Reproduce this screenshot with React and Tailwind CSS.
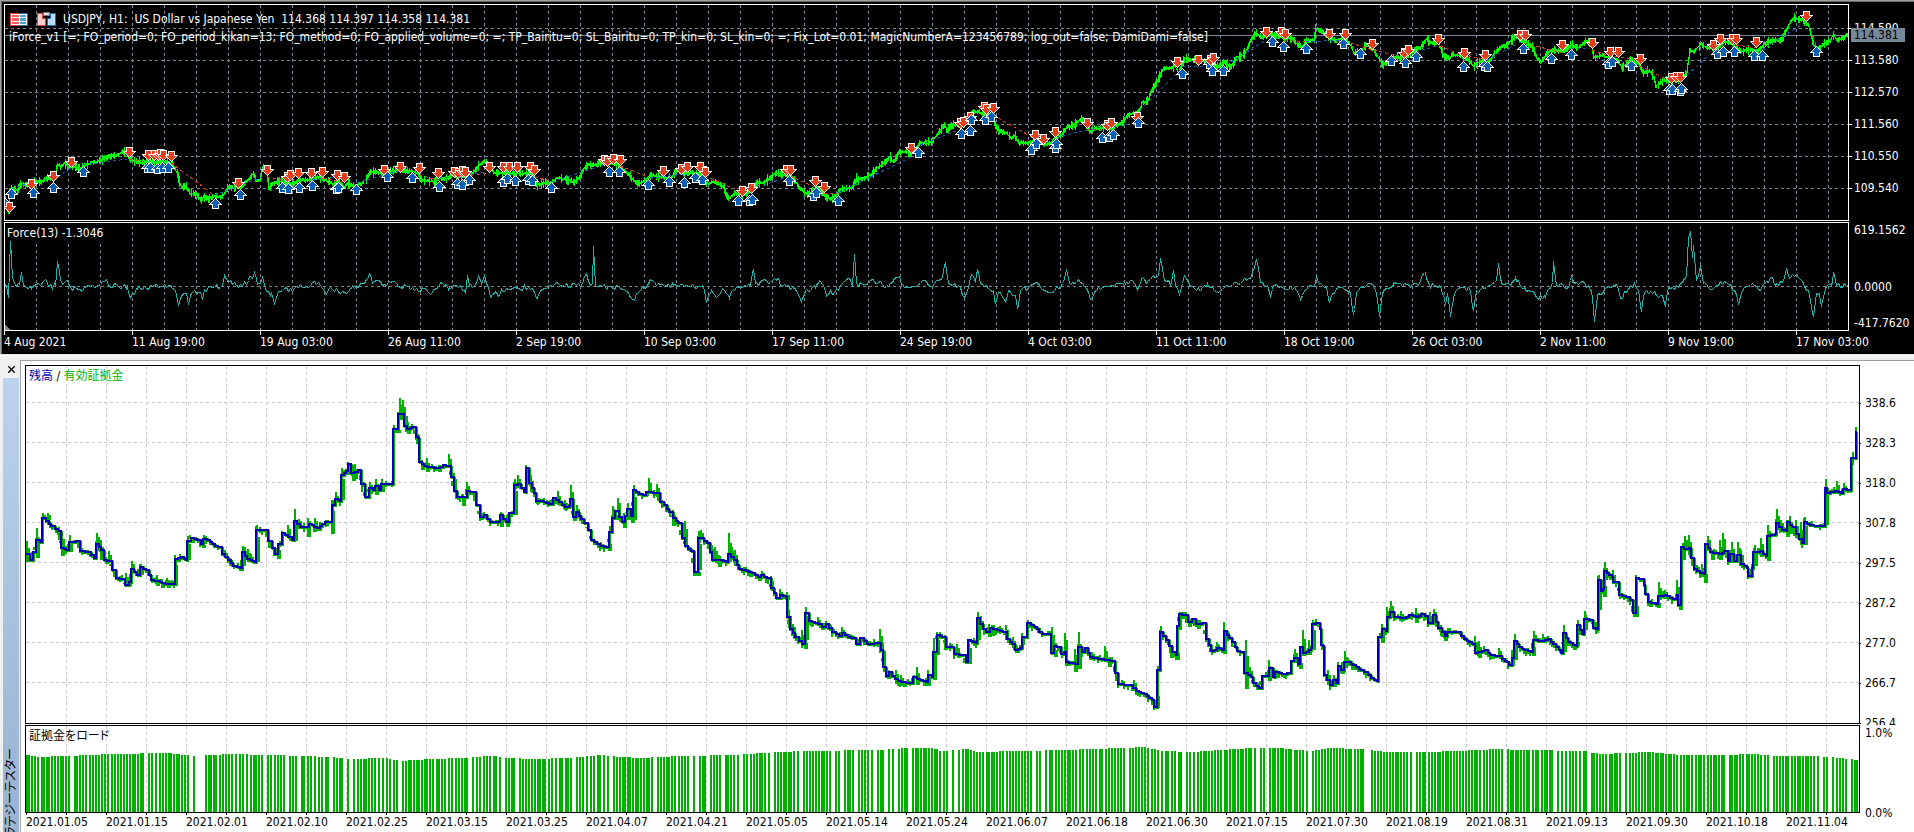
import React from 'react';
import { X } from 'lucide-react';

// x,y vertices of the hourly price line
const PRICE = `5,199 7,208 9,213 10,190 12,188 18,191 20,184 25,184 31,185 36,181 41,182 47,178 51,179 55,177 58,164 61,167 65,163 68,167 71,166 80,169 86,164 96,162 101,161 104,158 112,156 118,155 122,152 127,151 129,158 133,160 141,163 145,162 155,162 167,162 173,165 177,172 180,183 182,187 186,186 190,193 196,194 201,200 204,197 209,199 214,196 220,197 224,195 228,187 235,188 243,186 247,181 254,173 256,181 260,180 263,167 267,172 269,188 273,183 280,181 286,183 294,184 300,180 308,180 312,178 320,177 327,181 333,184 339,182 345,188 347,184 355,186 363,183 367,178 371,171 380,173 388,173 394,171 398,168 404,171 412,171 418,173 420,179 427,181 435,182 439,178 447,178 455,175 465,177 473,173 478,167 484,161 489,165 494,173 506,173 516,174 527,173 533,175 537,185 545,183 551,183 557,178 565,179 575,182 580,177 584,169 588,165 598,164 604,163 612,163 620,165 624,170 631,177 637,183 642,183 648,178 652,175 660,177 671,178 677,170 683,173 693,173 701,175 707,184 711,183 715,182 724,187 727,197 730,198 735,193 742,195 750,192 756,184 764,182 771,177 777,173 785,175 793,177 799,187 805,193 809,194 817,187 826,197 832,199 838,193 842,189 852,188 856,180 862,179 871,175 877,168 887,161 890,157 894,162 899,152 907,152 911,155 920,143 932,142 938,134 941,130 945,124 947,131 952,125 960,126 966,123 973,112 979,112 985,115 993,115 995,125 999,131 1007,133 1011,138 1015,136 1019,143 1028,143 1036,140 1044,145 1052,142 1056,136 1062,135 1067,127 1075,125 1081,119 1085,122 1090,132 1095,128 1103,128 1113,127 1122,123 1128,115 1136,113 1140,110 1142,103 1148,101 1152,90 1158,80 1164,68 1171,68 1175,66 1179,72 1185,58 1189,60 1199,60 1207,62 1218,67 1224,62 1231,68 1236,58 1240,57 1246,52 1252,38 1256,33 1262,38 1269,35 1278,35 1286,38 1292,38 1296,43 1303,48 1305,42 1314,40 1316,28 1323,32 1329,37 1335,41 1343,38 1350,43 1354,53 1360,52 1366,45 1374,50 1380,60 1383,65 1390,61 1398,57 1405,58 1413,52 1421,47 1427,39 1431,43 1439,42 1443,55 1450,59 1452,54 1460,56 1468,59 1474,66 1480,62 1490,62 1494,54 1501,47 1507,45 1515,37 1521,40 1527,43 1533,48 1537,58 1541,63 1547,53 1554,50 1562,51 1572,45 1578,48 1586,41 1592,44 1594,58 1603,55 1609,58 1619,61 1622,68 1631,60 1639,63 1643,73 1650,70 1654,78 1656,86 1664,80 1672,82 1682,78 1687,72 1690,50 1694,52 1701,44 1707,48 1717,48 1725,42 1731,43 1741,52 1749,49 1758,51 1764,45 1770,41 1782,40 1786,30 1791,22 1794,18 1803,20 1809,25 1813,43 1817,49 1823,45 1831,40 1834,34 1837,40 1843,38 1847,35`;

const FORCE = `5,284 8,297 10,240 12,277 15,284 19,284 21,272 23,285 31,288 41,284 45,279 48,286 55,285 57,261 60,279 63,283 67,280 70,287 81,291 84,287 100,284 106,279 109,285 127,286 129,295 133,293 137,289 154,285 171,287 175,290 178,305 182,294 186,293 188,304 191,293 200,292 202,299 204,289 212,287 222,285 224,275 229,281 237,285 247,283 249,276 252,278 254,272 257,284 260,283 262,277 266,291 271,293 274,303 278,291 284,288 292,291 296,286 310,285 318,282 322,288 325,293 331,288 337,289 340,293 346,293 351,288 357,287 364,283 369,273 372,283 378,280 382,285 389,281 392,281 398,286 416,288 420,291 423,288 429,293 433,289 442,283 449,287 461,287 465,293 467,275 469,285 475,284 478,276 481,283 484,275 488,287 490,297 495,291 498,296 501,289 514,287 531,288 537,298 541,289 549,286 555,283 569,286 582,283 586,273 590,285 592,283 593,246 595,285 612,287 622,289 629,295 633,299 637,293 640,290 644,288 651,280 656,285 673,285 701,286 704,290 706,302 711,290 716,297 722,288 729,298 733,289 738,287 750,285 753,269 755,283 758,285 762,280 768,283 777,278 781,285 793,288 801,301 805,290 815,287 819,280 824,287 826,296 830,290 834,293 840,285 849,278 852,286 854,254 856,283 866,284 873,279 877,283 887,285 899,276 901,285 911,287 922,280 928,285 934,283 941,279 945,262 948,283 958,285 964,297 968,287 971,274 975,282 977,270 980,283 987,287 993,290 995,303 999,292 1005,301 1009,290 1015,295 1017,308 1020,290 1028,287 1038,283 1044,290 1052,292 1062,283 1066,269 1069,283 1079,281 1086,288 1090,299 1095,290 1109,286 1124,285 1132,280 1137,290 1141,278 1146,283 1153,275 1158,275 1160,258 1164,280 1171,282 1173,270 1175,285 1179,295 1184,275 1189,284 1199,290 1207,283 1217,291 1228,286 1240,283 1245,278 1250,278 1256,259 1260,282 1267,285 1270,296 1273,285 1276,284 1282,287 1294,287 1300,299 1305,289 1314,286 1316,276 1319,283 1326,287 1329,302 1332,293 1337,288 1349,290 1353,314 1356,292 1362,287 1372,284 1376,293 1379,316 1382,293 1388,288 1396,283 1409,286 1419,282 1421,277 1425,272 1429,285 1439,285 1442,293 1445,304 1447,293 1450,316 1454,293 1460,287 1470,290 1473,310 1476,290 1484,288 1492,283 1496,280 1498,263 1501,282 1511,283 1515,277 1523,288 1533,291 1537,298 1545,297 1549,288 1552,282 1553,261 1556,285 1568,287 1571,276 1574,283 1584,282 1591,290 1594,321 1597,295 1605,288 1616,284 1620,298 1627,290 1634,283 1638,290 1641,311 1644,292 1652,293 1662,295 1665,305 1668,287 1678,287 1683,280 1686,277 1688,237 1690,231 1692,257 1693,245 1696,280 1700,265 1703,283 1713,288 1724,281 1731,286 1735,292 1738,304 1742,290 1754,285 1760,290 1764,283 1772,277 1775,285 1782,282 1786,268 1789,278 1795,275 1803,283 1808,290 1813,316 1816,293 1819,293 1821,306 1825,288 1831,285 1833,273 1836,285 1847,285`;

const BALANCE = `26,554 30,560 33,552 36,540 40,542 42,518 46,521 51,526 58,531 61,548 66,550 69,542 76,541 80,551 88,552 94,558 96,544 101,550 104,560 109,561 112,570 116,578 122,579 125,585 129,582 131,569 137,575 140,567 146,570 151,580 157,581 165,584 174,584 175,559 181,557 186,560 187,541 191,538 197,540 201,544 203,539 207,540 212,544 218,547 222,554 228,560 233,566 240,568 242,552 247,559 255,562 256,530 265,530 268,541 275,554 278,544 281,544 282,533 288,537 292,540 294,521 300,527 306,527 309,524 317,528 325,522 331,522 332,505 335,499 340,501 341,475 346,471 348,464 351,473 358,470 361,484 365,497 369,488 373,490 375,486 379,490 381,484 392,484 393,429 397,429 398,414 403,414 404,426 407,429 412,427 416,437 418,438 419,462 424,466 437,468 443,465 449,466 451,477 454,491 457,497 464,497 467,491 473,492 476,505 480,517 484,515 490,522 498,522 500,515 506,522 509,513 513,513 514,485 518,484 524,492 526,468 529,483 534,493 536,501 541,501 549,504 553,498 559,502 565,507 569,506 570,499 573,517 576,512 584,523 588,530 591,540 600,546 607,547 609,532 612,518 615,511 622,522 627,509 631,516 633,490 639,494 643,495 646,492 656,493 660,502 664,505 669,512 673,518 678,523 682,538 685,546 691,551 694,572 696,572 698,538 701,538 707,543 712,560 720,560 726,562 728,554 734,560 739,569 752,573 758,577 761,575 767,578 771,588 776,598 780,595 786,597 787,617 790,629 795,637 802,644 804,644 805,613 809,621 818,624 822,627 826,624 832,632 839,636 842,633 848,637 854,638 856,644 860,638 867,644 878,643 881,650 883,667 886,676 889,672 895,679 901,682 909,683 913,677 920,680 926,682 928,675 932,677 933,652 937,635 942,637 946,647 952,647 954,654 962,655 966,662 968,640 976,643 977,618 983,629 986,632 990,628 1003,632 1007,639 1012,644 1015,650 1020,648 1022,637 1026,637 1027,623 1034,627 1042,634 1050,634 1051,653 1054,646 1059,647 1061,654 1064,652 1066,662 1075,664 1078,647 1082,652 1085,648 1090,657 1101,659 1113,661 1115,673 1118,684 1130,685 1136,691 1144,694 1152,700 1154,707 1156,707 1157,670 1159,670 1160,632 1166,640 1172,652 1176,655 1177,626 1179,614 1184,615 1188,622 1192,619 1196,624 1202,623 1206,639 1211,651 1217,648 1222,650 1224,631 1232,642 1237,651 1243,652 1244,673 1251,677 1253,683 1259,688 1262,676 1266,676 1269,668 1273,677 1275,672 1282,674 1290,673 1291,661 1294,658 1298,664 1300,647 1303,653 1309,650 1311,648 1312,624 1316,623 1320,629 1321,645 1323,646 1324,675 1330,685 1333,680 1336,683 1338,666 1341,670 1344,662 1348,662 1356,667 1364,672 1371,678 1377,681 1378,637 1382,629 1386,631 1387,617 1390,612 1394,617 1403,618 1409,615 1416,617 1421,614 1425,616 1428,623 1432,623 1433,615 1438,628 1445,636 1447,632 1458,632 1464,639 1472,644 1475,653 1485,650 1490,655 1498,656 1502,659 1507,662 1509,665 1512,658 1514,641 1519,647 1524,650 1531,652 1533,640 1541,641 1548,639 1556,647 1561,653 1563,633 1568,642 1576,646 1577,625 1582,634 1584,619 1592,620 1593,628 1596,629 1598,580 1601,591 1603,589 1604,571 1612,577 1613,582 1617,582 1619,595 1626,597 1630,600 1633,613 1635,613 1636,578 1641,579 1644,585 1645,594 1648,602 1656,604 1658,596 1664,595 1673,599 1677,595 1678,605 1680,605 1681,547 1684,549 1689,548 1691,558 1694,569 1700,573 1704,574 1705,544 1710,552 1719,554 1724,551 1728,561 1730,554 1734,561 1737,555 1741,564 1747,568 1748,576 1752,568 1753,552 1760,551 1766,556 1767,536 1775,534 1776,523 1782,530 1786,531 1787,522 1792,527 1796,534 1802,543 1804,522 1810,525 1817,526 1824,526 1825,488 1827,493 1835,491 1841,493 1843,489 1850,490 1851,458 1855,458 1856,431`;

// x,top,bottom of each equity swing around the balance
const EQUITY = `26,541,562 36,528,558 42,513,520 47,513,520 58,527,540 61,531,556 69,535,552 96,533,545 100,540,560 108,551,562 125,573,586 131,561,570 128,578,586 140,564,575 156,575,586 166,578,585 174,555,586 187,536,560 202,544,548 203,535,544 224,550,558 240,560,571 242,546,566 244,547,558 247,549,560 250,554,562 256,525,562 268,536,548 277,545,559 287,525,537 294,509,541 298,519,526 307,518,537 314,518,526 318,526,531 331,500,534 335,492,503 341,468,500 347,462,475 352,465,481 354,464,479 361,480,487 369,482,492 375,479,495 381,479,492 393,425,433 397,428,433 399,398,420 402,400,420 404,410,428 407,422,434 416,430,444 421,460,470 426,458,472 438,465,472 448,454,468 453,473,491 462,494,506 466,482,495 480,514,520 500,512,527 506,515,527 514,479,515 517,475,487 526,467,485 530,475,492 536,495,504 546,500,504 557,491,505 564,500,510 570,485,507 573,510,521 576,505,518 600,542,549 608,540,551 612,506,520 617,498,513 623,513,528 627,503,520 631,510,523 633,485,520 648,478,493 656,484,497 672,510,526 684,521,546 697,570,576 698,531,570 700,530,540 711,545,558 714,547,560 718,555,567 728,533,562 731,547,560 734,550,566 749,570,577 758,575,581 761,571,578 770,576,590 779,589,598 786,592,600 788,610,628 792,624,634 801,630,645 804,640,649 805,607,640 810,620,626 817,617,626 828,623,630 841,627,637 856,640,646 879,629,650 882,643,666 887,670,679 895,670,682 900,675,684 916,667,685 927,670,686 933,638,680 936,632,655 944,635,650 956,644,656 968,640,664 977,612,640 980,616,630 988,624,637 991,626,636 999,626,633 1005,625,640 1012,637,648 1016,646,653 1021,633,645 1027,620,628 1051,627,652 1054,646,657 1064,633,655 1067,660,666 1074,649,672 1078,632,669 1081,647,653 1091,652,657 1104,646,661 1108,658,667 1121,680,686 1133,680,690 1156,690,708 1160,626,640 1170,645,658 1176,650,660 1178,614,630 1185,612,618 1188,618,627 1197,620,629 1216,642,652 1223,622,654 1226,630,640 1245,640,689 1249,667,678 1256,682,690 1268,660,681 1276,670,678 1294,649,662 1299,660,669 1302,630,656 1308,640,655 1312,620,650 1327,670,684 1333,675,684 1341,662,674 1344,651,668 1347,658,666 1381,624,643 1386,607,620 1390,601,616 1400,611,620 1415,608,623 1429,612,625 1433,609,618 1440,625,636 1444,630,641 1474,636,654 1478,641,658 1498,648,656 1511,650,666 1514,634,660 1532,642,656 1533,631,642 1542,634,642 1561,650,655 1563,625,652 1576,640,646 1577,620,635 1584,611,630 1595,622,633 1598,575,610 1603,580,597 1604,562,580 1612,570,584 1635,600,617 1657,600,608 1658,582,600 1660,588,598 1664,590,597 1676,580,600 1679,595,610 1682,543,560 1684,536,548 1688,535,555 1696,565,572 1701,564,577 1704,570,583 1707,536,548 1711,550,560 1719,540,560 1722,533,550 1731,542,563 1737,542,560 1740,550,566 1749,570,578 1754,545,566 1760,538,557 1767,525,561 1776,509,530 1780,520,530 1786,520,537 1789,516,534 1795,520,538 1800,522,545 1804,517,545 1825,479,525 1836,481,492 1843,483,492 1850,484,493 1852,452,465 1855,427,458`;

const LOAD = `26,755 40,757 60,756 90,755 110,754 165,753 180,755 195,756 230,754 270,755 330,757 345,759 385,758 400,761 430,759 460,758 490,756 510,758 530,759 570,758 600,755 620,757 640,758 680,756 730,755 780,752 800,751 880,750 905,748 930,748 940,751 965,749 977,752 1060,750 1120,748 1145,747 1160,751 1190,752 1250,748 1275,748 1310,751 1330,748 1360,749 1385,752 1430,752 1500,749 1520,750 1580,751 1600,754 1650,752 1680,755 1720,755 1750,754 1780,756 1810,756 1840,758 1858,760`;

const SELLS = `9,207 31,184 53,176 71,162 129,152 148,155 154,155 158,155 160,154 163,155 171,156 238,183 267,170 287,177 290,175 298,173 311,173 322,172 337,175 344,177 384,170 400,167 419,168 438,173 454,172 458,173 462,171 465,172 489,167 503,167 509,167 517,167 530,167 534,170 604,160 607,161 613,159 620,160 663,171 681,169 687,167 700,167 705,172 742,191 751,188 786,170 790,170 815,181 824,187 911,148 960,123 963,122 970,117 984,107 986,109 993,108 1035,135 1043,139 1055,132 1087,123 1107,125 1111,123 1137,117 1177,62 1198,60 1210,60 1213,58 1266,32 1281,32 1285,34 1329,34 1345,34 1372,44 1404,53 1408,50 1438,39 1464,53 1485,55 1520,35 1525,35 1562,45 1592,43 1610,52 1618,52 1640,59 1671,78 1676,77 1680,77 1713,45 1720,39 1732,39 1736,39 1756,42 1806,16`;

const BUYS = `4,202 11,193 33,192 53,187 83,171 147,167 150,167 157,168 162,167 168,167 215,203 240,194 282,187 288,188 299,187 312,185 336,188 338,187 356,189 387,176 412,177 439,186 457,183 462,184 469,179 503,181 507,178 515,180 528,179 532,180 551,187 609,171 619,171 648,184 669,181 684,182 695,177 702,179 738,200 749,200 752,199 789,180 813,195 816,192 838,200 918,152 961,133 970,130 971,119 985,119 991,116 1031,149 1036,143 1055,147 1056,143 1102,137 1109,136 1113,134 1138,122 1182,73 1209,63 1212,70 1223,70 1272,41 1283,46 1306,48 1343,43 1360,53 1391,60 1405,62 1416,56 1463,66 1484,65 1487,66 1523,48 1551,58 1571,54 1608,63 1612,61 1631,65 1669,89 1672,89 1680,90 1681,88 1717,53 1723,51 1734,51 1754,55 1762,55 1816,51`;

const LONG_TRADES = 'M11 189L31 182M53 180L71 168M83 165L127 159M215 195L262 177M312 180L337 177M356 183L398 171M439 178L486 172M551 182L604 165M650 178L687 174M752 190L786 177M838 193L911 157M920 145L961 129M1056 137L1102 127M1113 127L1138 122M1140 110L1182 68M1182 66L1209 66M1231 62L1266 40M1306 42L1340 40M1416 52L1440 45M1487 60L1521 42M1571 49L1590 48M1687 75L1708 56M1762 50L1801 25';
const SHORT_TRADES = 'M9 203L12 189M129 159L145 162M171 163L214 195M267 177L287 181M322 178L345 182M419 175L438 180M465 176L489 173M534 177L551 181M620 166L648 177M705 176L742 192M790 176L815 187M824 193L838 193M993 115L1035 139M1087 129L1107 130M1285 40L1305 42M1345 41L1372 50L1404 57M1440 46L1464 56L1485 59M1525 43L1562 53M1592 50L1610 56L1640 60M1640 66L1672 82M1736 45L1756 48M1809 25L1816 45';

const SETTINGS =
  'iForce_v1 [=; FO_period=0; FO_period_kikan=13; FO_method=0; FO_applied_volume=0; =; TP_Bairitu=0; SL_Bairitu=0; TP_kin=0; SL_kin=0; =; Fix_Lot=0.01; MagicNumberA=123456789; log_out=false; DamiDami=false]';

const PRICE_LEVELS = ['114.590', '113.580', '112.570', '111.560', '110.550', '109.540'];
const HOURS = [
  '4 Aug 2021', '11 Aug 19:00', '19 Aug 03:00', '26 Aug 11:00', '2 Sep 19:00',
  '10 Sep 03:00', '17 Sep 11:00', '24 Sep 19:00', '4 Oct 03:00', '11 Oct 11:00',
  '18 Oct 19:00', '26 Oct 03:00', '2 Nov 11:00', '9 Nov 19:00', '17 Nov 03:00',
];
const BALANCE_LEVELS = ['338.6', '328.3', '318.0', '307.8', '297.5', '287.2', '277.0', '266.7', '256.4'];
const DAYS = [
  '2021.01.05', '2021.01.15', '2021.02.01', '2021.02.10', '2021.02.25', '2021.03.15',
  '2021.03.25', '2021.04.07', '2021.04.21', '2021.05.05', '2021.05.14', '2021.05.24',
  '2021.06.07', '2021.06.18', '2021.06.30', '2021.07.15', '2021.07.30', '2021.08.19',
  '2021.08.31', '2021.09.13', '2021.09.30', '2021.10.18', '2021.11.04',
];

const parse = (text) => text.split(' ').map((item) => item.split(',').map(Number));

// small seeded generator, so that every render draws the same ticks
const makeRandom = (seed) => {
  let state = seed;
  return () => {
    state = (state * 16807) % 2147483647;
    return state / 2147483647;
  };
};

const sample = (points, x) => {
  let i = 1;
  while (i < points.length - 1 && points[i][0] < x) i += 1;
  const [x0, y0] = points[i - 1];
  const [x1, y1] = points[i];
  const t = Math.min(1, Math.max(0, (x - x0) / (x1 - x0)));
  return y0 + (y1 - y0) * t;
};

const pricePath = () => {
  const points = parse(PRICE);
  const random = makeRandom(11);
  let d = '';
  for (let x = 5; x < 1848; x += 1) {
    const y = sample(points, x) + (random() - 0.5) * 3;
    const next = sample(points, x + 1);
    const spread = 0.5 + random() * random() * 5;
    const top = Math.round(Math.min(y, next) - spread);
    const bottom = Math.round(Math.max(y, next) + spread);
    d += `M${x + 0.5} ${top}V${bottom}`;
  }
  return d;
};

const forcePath = () => {
  const points = parse(FORCE);
  const keys = new Map(points);
  const random = makeRandom(29);
  let d = '';
  for (let x = 5; x < 1848; x += 1) {
    if (!keys.has(x) && x % 2) continue;
    const y = keys.has(x) ? keys.get(x) : sample(points, x) + (random() - 0.5) * 5;
    d += `${d ? 'L' : 'M'}${x + 0.5} ${Math.round(y) + 0.5}`;
  }
  return d;
};

const balancePath = (shift = 0) => {
  const points = parse(BALANCE).map(([x, y]) => [x + shift, y + shift]);
  let d = `M${points[0][0]} ${points[0][1]}`;
  points.slice(1).forEach(([x, y], i) => {
    const [px, py] = points[i];
    const steps = Math.max(1, Math.round((x - px) / 3));
    for (let s = 1; s <= steps; s += 1) {
      d += `H${Math.round(px + ((x - px) * s) / steps)}V${Math.round(py + ((y - py) * s) / steps)}`;
    }
  });
  return d;
};

const equityPath = () => {
  const swings = parse(EQUITY).map(([x, top, bottom]) => {
    const inset = Math.round((bottom - top) / 3);
    return `M${x + 1} ${top}V${bottom}${x < 1850 ? `M${x + 3} ${top + inset}V${bottom}` : ''}`;
  });
  const points = parse(BALANCE);
  const random = makeRandom(5);
  for (let x = 28; x < 1850; x += 2) {
    const y = Math.round(sample(points, x));
    swings.push(`M${x} ${y - Math.round(random() * 4)}V${y + Math.round(random() * 5)}`);
  }
  return swings.join('');
};

const loadPath = () => {
  const points = parse(LOAD);
  const random = makeRandom(71);
  let d = '';
  let x = 26;
  while (x < 1856) {
    const r = random();
    const width = r < 0.25 ? 4 : 2;
    const gap = random();
    const idle = (x > 194 && x < 201) || (x > 1361 && x < 1370);
    if (!idle) d += `M${x} ${Math.round(sample(points, x))}h${width}V812h-${width}z`;
    x += width + 1;
    if (gap < 0.3) x += 1;
    if (gap < 0.1) x += 2;
  }
  return d;
};

const PRICE_PATH = pricePath();
const FORCE_PATH = forcePath();
const BALANCE_PATH = balancePath();
const EQUITY_PATH = equityPath() + balancePath(1);
const LOAD_PATH = loadPath();
const MARKERS = [
  ...parse(BUYS).map(([x, y]) => ({ x, y, buy: true })),
  ...parse(SELLS).map(([x, y]) => ({ x, y, buy: false })),
].sort((a, b) => a.x - b.x);

const Grid = ({ xs, ys, top, bottom, left, right, color }) => (
  <g stroke={color} strokeDasharray="3 3">
    {xs.map((x) => (
      <line key={x} x1={x + 0.5} x2={x + 0.5} y1={top} y2={bottom} />
    ))}
    {ys.map((y) => (
      <line key={y} x1={left} x2={right} y1={y + 0.5} y2={y + 0.5} />
    ))}
  </g>
);

const range = (start, step, count) => Array.from({ length: count }, (_, i) => start + i * step);

const Marker = ({ x, y, buy }) => (
  <path
    d={buy ? 'M0 -5L6 1H3V5H-3V1H-6Z' : 'M0 5L6 -1H3V-5H-3V-1H-6Z'}
    transform={`translate(${x + 0.5} ${y + 0.5})`}
    fill={buy ? '#0a5fb4' : '#e2401c'}
    stroke="#fff"
  />
);

const DepthIcon = () => (
  <svg width="18" height="13" viewBox="0 0 18 13" shapeRendering="crispEdges" aria-hidden="true">
    <rect width="9" height="13" fill="#d8453c" />
    <rect x="9" width="9" height="13" fill="#1b6db4" />
    <path d="M1 1h16v11H1z" fill="#fff" />
    <path d="M2 2h7v2H2zM2 5h7v3H2zM2 9h7v2H2z" fill="#e0655c" />
    <path d="M10 2h6v2h-6zM10 5h6v3h-6zM10 9h6v2h-6z" fill="#4f9fdc" />
  </svg>
);

const TradeIcon = () => (
  <svg width="19" height="14" viewBox="0 0 19 14" shapeRendering="crispEdges" aria-hidden="true">
    <path d="M0 1h6v5h3v8H0z" fill="#d8453c" />
    <path d="M1 2h4v5h3v6H1z" fill="#fbd0cb" />
    <path d="M13 1h6v13h-9V6h3z" fill="#1b6db4" />
    <path d="M14 2h4v11h-7V7h3z" fill="#b9dff8" />
    <rect x="6" y="0" width="7" height="4" fill="#777" />
    <rect x="7" y="1" width="5" height="2" fill="#e6e6e6" />
  </svg>
);

const PriceChart = () => (
  <section className="border-t border-l border-[#a0a0a0]">
    <div className="grid grid-cols-[minmax(0,1fr)_65px] gap-y-px border-t border-l border-[#696969] bg-black pt-0.5 pl-0.5 text-white">
      <div className="relative h-[217px] border border-white">
        <svg
          className="block h-full w-full"
          viewBox="5 5 1843 215"
          preserveAspectRatio="none"
          shapeRendering="crispEdges"
          fill="none"
        >
          <Grid xs={range(36, 32, 57)} ys={range(28, 32, 6)} top={5} bottom={218} left={5} right={1848} color="#778899" />
          <line x1="5" x2="1848" y1="35.5" y2="35.5" stroke="#778899" />
          <path d={PRICE_PATH} stroke="#00ff00" />
          <g strokeDasharray="3 3">
            <path d={LONG_TRADES} stroke="#0a5fb4" />
            <path d={SHORT_TRADES} stroke="#e2401c" />
          </g>
          {MARKERS.map((marker, i) => (
            <Marker key={i} {...marker} />
          ))}
        </svg>
        <div className="absolute top-1.5 left-[5px] flex items-center whitespace-pre">
          <DepthIcon />
          <span className="ml-[9px]">
            <TradeIcon />
          </span>
          <h1 className="ml-[7px]">USDJPY, H1:  US Dollar vs Japanese Yen  114.368 114.397 114.358 114.381</h1>
        </div>
        <p className="absolute top-6 left-1 whitespace-nowrap">{SETTINGS}</p>
      </div>
      <div className="relative pt-2">
        {PRICE_LEVELS.map((level) => (
          <div key={level} className="flex h-8 items-center gap-0.5">
            <span className="h-px w-[3px] bg-white" />
            {level}
          </div>
        ))}
        <span className="absolute top-6 left-0.5 h-3.5 w-[54px] bg-[#778899] pl-[3px] leading-3.5 text-black">114.381</span>
      </div>

      <div className="relative h-[109px] border border-white">
        <svg
          className="block h-full w-full"
          viewBox="5 223 1843 107"
          preserveAspectRatio="none"
          shapeRendering="crispEdges"
          fill="none"
        >
          <Grid xs={range(36, 32, 57)} ys={[286]} top={226} bottom={330} left={5} right={1848} color="#778899" />
          <path d={FORCE_PATH} stroke="#20b2aa" />
          <path d="M5 325L10 330H5Z" fill="#778899" />
        </svg>
        <p className="absolute top-0.5 left-0.5 bg-black">Force(13) -1.3046</p>
      </div>
      <div className="flex flex-col justify-between pl-[5px]">
        <span>619.1562</span>
        <span className="pt-5">0.0000</span>
        <span>-417.7620</span>
      </div>

      <div className="-mt-px grid h-[23px] grid-cols-[repeat(14,minmax(0,128fr))_minmax(0,53fr)]">
        {HOURS.map((hour) => (
          <div key={hour} className="whitespace-nowrap">
            <div className="h-1 w-px bg-white" />
            <span className="block leading-3.5">{hour}</span>
          </div>
        ))}
      </div>
    </div>
  </section>
);

const TesterTab = () => (
  <aside className="flex w-5 shrink-0 flex-col pr-px pl-[3px]">
    <button type="button" aria-label="閉じる" className="flex h-[18px] items-center justify-center text-black">
      <X size={11} strokeWidth={3} />
    </button>
    <div className="flex min-h-0 flex-1 justify-center overflow-hidden bg-linear-to-b from-[#bcd2ee] to-[#98b2d0] pt-[370px]">
      <span className="h-max rotate-180 whitespace-nowrap [font-feature-settings:'palt'] [text-orientation:sideways] [writing-mode:vertical-rl]">
        ストラテジーテスター
      </span>
    </div>
  </aside>
);

const TesterGraph = () => (
  <div className="grid min-w-0 flex-1 grid-cols-[minmax(0,1fr)_54px] grid-rows-[minmax(0,1fr)_88px_19px] border-t border-l border-[#a0a0a0] bg-white pt-1 pl-1 text-black">
    <div className="relative mb-px border border-black">
      <svg
        className="block h-full w-full"
        viewBox="26 366 1833 357"
        preserveAspectRatio="none"
        shapeRendering="crispEdges"
        fill="none"
      >
        <Grid xs={range(66, 40, 45)} ys={range(402, 40, 8)} top={366} bottom={723} left={26} right={1859} color="#c8c8c8" />
        <path d={EQUITY_PATH} stroke="#00b000" strokeWidth="2" />
        <path d={BALANCE_PATH} stroke="#0000b0" strokeWidth="2" />
      </svg>
      <p className="absolute top-0.5 left-[3px] bg-white">
        <span className="text-[#0000b0]">残高</span> / <span className="text-[#00b000]">有効証拠金</span>
      </p>
    </div>
    <div className="overflow-hidden pt-[18px]">
      {BALANCE_LEVELS.map((level) => (
        <div key={level} className="flex h-10 items-center gap-1">
          <span className="h-px w-px bg-black" />
          {level}
        </div>
      ))}
    </div>

    <div className="relative border border-black">
      <svg
        className="block h-full w-full"
        viewBox="26 726 1833 86"
        preserveAspectRatio="none"
        shapeRendering="crispEdges"
        fill="none"
      >
        <Grid xs={range(66, 40, 45)} ys={[]} top={726} bottom={812} left={26} right={1859} color="#c8c8c8" />
        <path d={LOAD_PATH} fill="#00b000" />
      </svg>
      <p className="absolute top-0.5 left-[3px] [font-feature-settings:'palt']">証拠金をロード</p>
    </div>
    <div className="-mb-2 flex flex-col justify-between pl-[5px]">
      <span>1.0%</span>
      <span>0.0%</span>
    </div>

    <div className="grid grid-cols-[repeat(22,minmax(0,80fr))_minmax(0,75fr)]">
      {DAYS.map((day) => (
        <div key={day} className="pl-px whitespace-nowrap">
          <div className="flex">
            <span className="h-0.5 w-px bg-black" />
            <span className="ml-[39px] h-0.5 w-px bg-black" />
          </div>
          <span className="block leading-3.5">{day}</span>
        </div>
      ))}
    </div>
  </div>
);

const App = () => (
  <main className="flex h-screen flex-col overflow-hidden bg-[#f0f0f0] font-['DejaVu_Sans_Condensed','Noto_Sans_CJK_JP',sans-serif] text-[12px] leading-4">
    <PriceChart />
    <div className="h-1.5 shrink-0 border-t border-[#e3e3e3] bg-[#f0f0f0]">
      <div className="h-px bg-white" />
    </div>
    <div className="flex min-h-0 flex-1">
      <TesterTab />
      <TesterGraph />
    </div>
  </main>
);

export default App;
